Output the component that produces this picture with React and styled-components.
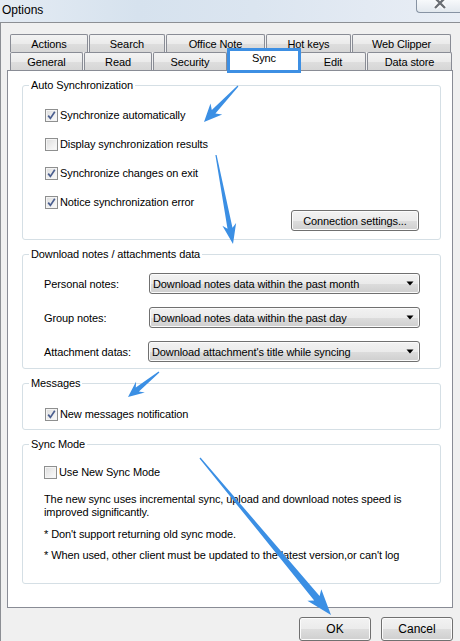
import React from "react";
import styled, { createGlobalStyle } from "styled-components";

const GlobalStyle = createGlobalStyle`
  html, body { margin: 0; padding: 0; background: #f0f0f0; }
  body {
    font-family: "Liberation Sans", Arial, sans-serif;
    font-size: 11px;
    letter-spacing: -0.1px;
    color: #000;
  }
`;

const topTabs = [
  { label: "Actions", width: 78 },
  { label: "Search", width: 76 },
  { label: "Office Note", width: 99 },
  { label: "Hot keys", width: 85 },
  { label: "Web Clipper", width: 99 },
];

const bottomTabs = [
  { label: "General", width: 73 },
  { label: "Read", width: 68 },
  { label: "Security", width: 74 },
  { label: "Sync", width: 74, active: true },
  { label: "Edit", width: 66 },
  { label: "Data store", width: 85 },
];

const arrows = [
  { from: [238, 86], to: [204, 122], headW: 16, headL: 18, neck: 5 },
  { from: [216, 155], to: [233, 244], headW: 14, headL: 20, neck: 5 },
  { from: [159, 372], to: [128, 397], headW: 14, headL: 16, neck: 5 },
  { from: [200, 458], to: [331, 615], headW: 18, headL: 26, neck: 7 },
];

function arrowPoints({ from, to, headW, headL, neck }) {
  const [x1, y1] = from;
  const [x2, y2] = to;
  const dx = x2 - x1;
  const dy = y2 - y1;
  const len = Math.sqrt(dx * dx + dy * dy);
  const ux = dx / len;
  const uy = dy / len;
  const px = -uy;
  const py = ux;
  const at = (d, w) => `${(x1 + ux * d + px * w).toFixed(1)},${(y1 + uy * d + py * w).toFixed(1)}`;
  const base = len - headL;
  const neckD = base + 4;
  return [
    at(0, 0.6),
    at(neckD, neck / 2),
    at(base, headW / 2),
    at(len, 0),
    at(base, -headW / 2),
    at(neckD, -neck / 2),
    at(0, -0.6),
  ].join(" ");
}

export default function App() {
  return (
    <Window>
      <GlobalStyle />
      <TitleBar>
        <Title>Options</Title>
        <CloseButton>
          <svg width="45" height="13" viewBox="0 0 45 13">
            <path d="M19 -2 L29 8 M29 -2 L19 8" stroke="#ffffff" strokeWidth="4.5" />
            <path d="M19 -2 L29 8 M29 -2 L19 8" stroke="#6b6f75" strokeWidth="2.4" />
          </svg>
        </CloseButton>
      </TitleBar>

      <Body>
        <TabRow>
          {topTabs.map((t) => (
            <Tab key={t.label} $w={t.width}>{t.label}</Tab>
          ))}
        </TabRow>
        <TabRow>
          {bottomTabs.map((t) =>
            t.active ? (
              <ActiveTab key={t.label} $w={t.width}>{t.label}</ActiveTab>
            ) : (
              <Tab key={t.label} $w={t.width}>{t.label}</Tab>
            )
          )}
        </TabRow>

        <Panel>
          <Group $h={161} $top={16} $left={22} $right={21}>
            <Legend>Auto Synchronization</Legend>
            <CheckList>
              <CheckRow label="Synchronize automatically" checked />
              <CheckRow label="Display synchronization results" />
              <CheckRow label="Synchronize changes on exit" checked />
              <CheckRow label="Notice synchronization error" checked />
            </CheckList>
            <ConnectionButton>Connection settings...</ConnectionButton>
          </Group>

          <Group $h={121} $top={12} $left={21} $right={20}>
            <Legend>Download notes / attachments data</Legend>
            <FieldList>
              <FieldRow>
                <FieldLabel>Personal notes:</FieldLabel>
                <Select>Download notes data within the past month<Caret /></Select>
              </FieldRow>
              <FieldRow>
                <FieldLabel>Group notes:</FieldLabel>
                <Select>Download notes data within the past day<Caret /></Select>
              </FieldRow>
              <FieldRow>
                <FieldLabel>Attachment datas:</FieldLabel>
                <Select $shift={-1}>Download attachment's title while syncing<Caret /></Select>
              </FieldRow>
            </FieldList>
          </Group>

          <Group $h={53} $top={17} $left={22} $right={21}>
            <Legend>Messages</Legend>
            <CheckRow label="New messages notification" checked />
          </Group>

          <Group $h={146} $top={14} $left={21} $right={20}>
            <Legend>Sync Mode</Legend>
            <CheckRow label="Use New Sync Mode" />
            <Note $top={14}>
              The new sync uses incremental sync, upload and download notes speed is
              <br />
              improved significantly.
            </Note>
            <Note $top={9}>* Don't support returning old sync mode.</Note>
            <Note $top={8}>
              * When used, other client must be updated to the latest version,or can't log
            </Note>
          </Group>
        </Panel>

        <ButtonBar>
          <DialogButton>OK</DialogButton>
          <DialogButton>Cancel</DialogButton>
        </ButtonBar>
      </Body>

      <Overlay width="460" height="641" viewBox="0 0 460 641">
        {arrows.map((a, i) => (
          <polygon key={i} points={arrowPoints(a)} fill="#3b8fe4" />
        ))}
      </Overlay>
    </Window>
  );
}

function CheckRow({ label, checked }) {
  return (
    <Row>
      <Box>
        {checked && (
          <svg width="11" height="11" viewBox="0 0 11 11">
            <path d="M2.2 5.6 L4.4 8.4 L8.8 1.8" fill="none" stroke="#4a5e8f" strokeWidth="1.7" />
          </svg>
        )}
      </Box>
      <span>{label}</span>
    </Row>
  );
}

function Caret() {
  return (
    <CaretIcon width="8" height="5" viewBox="0 0 8 5">
      <path d="M0.5 0.5 L7.5 0.5 L4 4.5 Z" fill="#000" />
    </CaretIcon>
  );
}

const Window = styled.div`
  position: relative;
  width: 460px;
  height: 641px;
  overflow: hidden;
`;

const TitleBar = styled.div`
  height: 22px;
  display: flex;
  align-items: flex-start;
  border-bottom: 1px solid #8c8f94;
  background: linear-gradient(
    to right,
    #e4ebf3 0%,
    #d6e2ee 30%,
    #dbe5f0 55%,
    #e3eaf3 80%,
    #e9eef5 100%
  );
`;

const Title = styled.div`
  font-size: 12px;
  letter-spacing: 0;
  padding: 3px 0 0 2px;
  color: #000;
`;

const CloseButton = styled.div`
  margin-left: auto;
  margin-right: -2px;
  width: 46px;
  height: 13px;
  box-sizing: border-box;
  border: 1px solid #8793a3;
  border-top: none;
  border-right: none;
  border-radius: 0 0 0 4px;
  background: linear-gradient(#f7f9fb, #e2e8ee);
  overflow: hidden;

  svg { display: block; margin-left: -1px; }
`;

const Body = styled.div`
  height: 618px;
  box-sizing: border-box;
  border-left: 1px solid #8c8f94;
  background: #f0f0f0;
  padding: 11px 7px 0 6px;
  display: flex;
  flex-direction: column;
`;

const TabRow = styled.div`
  display: flex;
  gap: 1px;
  margin-left: 3px;
  height: 18px;
`;

const Tab = styled.div`
  width: ${(p) => p.$w}px;
  height: 18px;
  box-sizing: border-box;
  border: 1px solid #898c95;
  border-bottom: none;
  border-radius: 2px 2px 0 0;
  background: linear-gradient(#f3f3f3 0%, #ebebeb 50%, #dedede 51%, #d6d6d6 100%);
  display: flex;
  align-items: center;
  justify-content: center;
  white-space: nowrap;
`;

const ActiveTab = styled.div`
  position: relative;
  z-index: 2;
  width: ${(p) => p.$w}px;
  height: 25px;
  margin: -4px -2px 0 -1px;
  box-sizing: border-box;
  border: 3px solid #3d8fe3;
  background: #fff;
  display: flex;
  align-items: center;
  justify-content: center;
  padding-bottom: 5px;
  white-space: nowrap;
`;

const Panel = styled.div`
  position: relative;
  z-index: 1;
  height: 538px;
  box-sizing: border-box;
  border: 1px solid #898c95;
  background: #fff;
  padding: 8px 11px 0 14px;
  display: flex;
  flex-direction: column;
  gap: 8px;
`;

const Legend = styled.legend`
  padding: 0 2px;
  line-height: 13px;
  font-size: 11px;
`;

const Group = styled.fieldset`
  margin: 0;
  min-width: 0;
  height: ${(p) => p.$h}px;
  box-sizing: border-box;
  border: 1px solid #d5dfe5;
  border-radius: 3px;
  padding: ${(p) => `${p.$top}px ${p.$right}px 0 ${p.$left}px`};
  display: flex;
  flex-direction: column;

  & > ${Legend} {
    margin-left: ${(p) => 6 - p.$left}px;
  }
`;

const CheckList = styled.div`
  display: flex;
  flex-direction: column;
  gap: 15px;
`;

const Row = styled.div`
  display: flex;
  align-items: center;
  gap: 2px;
  height: 14px;
  white-space: nowrap;
`;

const Box = styled.span`
  width: 13px;
  height: 13px;
  box-sizing: border-box;
  border: 1px solid #8e8f8f;
  background: linear-gradient(135deg, #dcdcdc 0%, #f0f0f0 60%, #fbfbfb 100%);
  box-shadow: inset 0 0 0 1px #f4f4f4;
  display: flex;
  align-items: center;
  justify-content: center;

  svg { display: block; }
`;

const ConnectionButton = styled.div`
  align-self: flex-end;
  margin-top: 1px;
  width: 128px;
  height: 21px;
  box-sizing: border-box;
  border: 1px solid #707070;
  border-radius: 3px;
  background: linear-gradient(#f2f2f2 0%, #ebebeb 50%, #dddddd 51%, #cfcfcf 100%);
  box-shadow: inset 0 0 0 1px #fbfbfb;
  display: flex;
  align-items: center;
  justify-content: center;
  white-space: nowrap;
`;

const FieldList = styled.div`
  display: flex;
  flex-direction: column;
  gap: 13px;
`;

const FieldRow = styled.div`
  display: flex;
  align-items: center;
  height: 21px;
`;

const FieldLabel = styled.div`
  width: 105px;
  flex-shrink: 0;
  white-space: nowrap;
`;

const Select = styled.div`
  margin-left: ${(p) => p.$shift || 0}px;
  width: 272px;
  height: 21px;
  box-sizing: border-box;
  border: 1px solid #707070;
  border-radius: 3px;
  background: linear-gradient(#f2f2f2 0%, #ebebeb 50%, #dddddd 51%, #cfcfcf 100%);
  box-shadow: inset 0 0 0 1px #fbfbfb;
  padding-left: 3px;
  display: flex;
  align-items: center;
  white-space: nowrap;
`;

const CaretIcon = styled.svg`
  margin-left: auto;
  margin-right: 5px;
  display: block;
`;

const Note = styled.div`
  margin-top: ${(p) => p.$top}px;
  line-height: 13px;
  white-space: nowrap;
`;

const ButtonBar = styled.div`
  display: flex;
  justify-content: flex-end;
  gap: 10px;
  margin-top: 9px;
`;

const DialogButton = styled.div`
  width: 72px;
  height: 24px;
  box-sizing: border-box;
  border: 1px solid #707070;
  border-radius: 3px;
  background: linear-gradient(#f2f2f2 0%, #ebebeb 50%, #dddddd 51%, #cfcfcf 100%);
  box-shadow: inset 0 0 0 1px #fbfbfb;
  display: flex;
  align-items: center;
  justify-content: center;
  font-size: 12px;
  letter-spacing: 0;
`;

const Overlay = styled.svg`
  position: absolute;
  left: 0;
  top: 0;
  pointer-events: none;
  z-index: 10;
`;
